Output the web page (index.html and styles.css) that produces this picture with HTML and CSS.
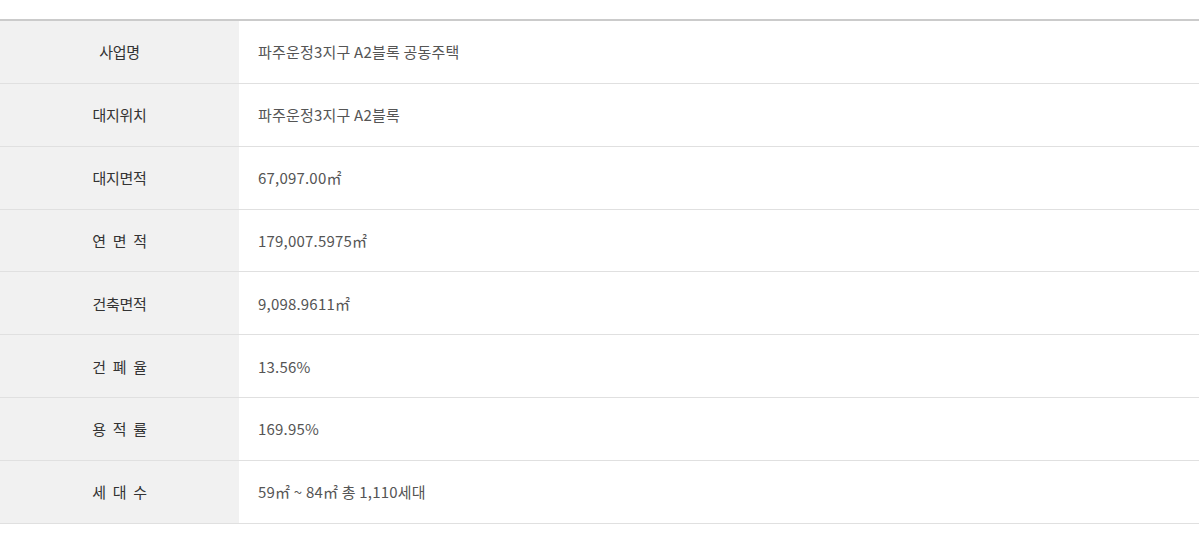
FILE: index.html
```html
<!DOCTYPE html>
<html>
<head>
	<title>사업개요</title>
	<meta charset="utf-8">
	<link rel="stylesheet" href="styles.css">
</head>
<body>
	<table class="info">
		<tr>
			<th>사업명</th>
			<td>파주운정3지구 A2블록 공동주택</td>
		</tr>
		<tr>
			<th>대지위치</th>
			<td>파주운정3지구 A2블록</td>
		</tr>
		<tr>
			<th>대지면적</th>
			<td>67,097.00㎡</td>
		</tr>
		<tr>
			<th>연 면 적</th>
			<td>179,007.5975㎡</td>
		</tr>
		<tr>
			<th>건축면적</th>
			<td>9,098.9611㎡</td>
		</tr>
		<tr>
			<th>건 폐 율</th>
			<td>13.56%</td>
		</tr>
		<tr>
			<th>용 적 률</th>
			<td>169.95%</td>
		</tr>
		<tr>
			<th>세 대 수</th>
			<td>59㎡ ~ 84㎡ 총 1,110세대</td>
		</tr>
	</table>
</body>
</html>
```

FILE: styles.css
```css
*{
	box-sizing: border-box;
}

body{
	margin: 0;
	padding-top: 19px;
	background: #fff;
	font-family: "Noto Sans CJK KR", "Noto Sans", sans-serif;
}

.info{
	width: 1199px;
	border-collapse: separate;
	border-spacing: 0;
	border-top: 2px solid #cbcbcb;
}

.info th, .info td{
	height: 62.85px;
	border-bottom: 1px solid #e0e0e0;
	font-size: 15px;
	font-weight: normal;
	padding: 0;
}

.info th{
	width: 239px;
	background: #f1f1f1;
	color: #333;
	text-align: center;
	letter-spacing: -0.3px;
	word-spacing: 4px;
	white-space: pre;
}

.info td{
	padding-left: 19px;
	color: #555;
	text-align: left;
	letter-spacing: 0.2px;
}
```
